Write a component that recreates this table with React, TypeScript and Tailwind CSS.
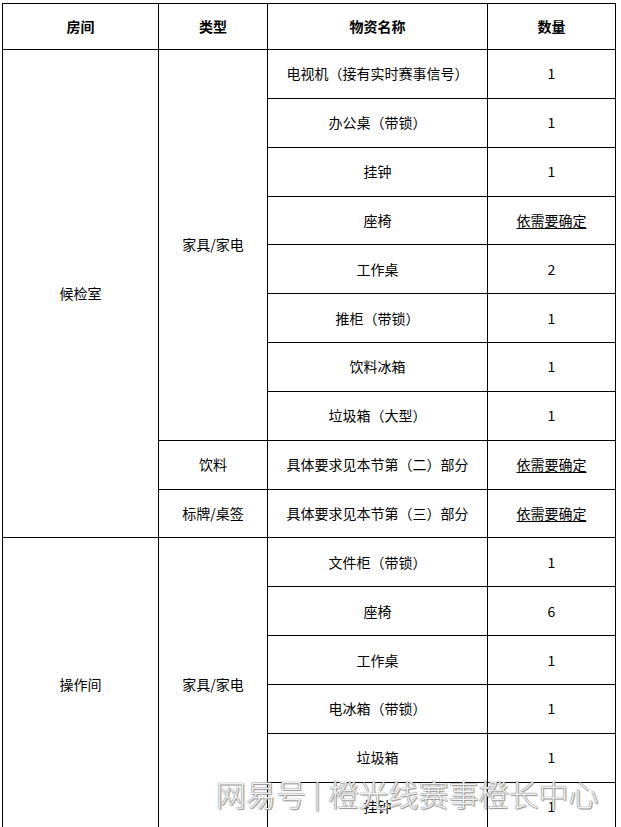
import React from 'react'

type Item = { name: string; qty: string }

const waitingItems: Item[] = [
  { name: '电视机（接有实时赛事信号）', qty: '1' },
  { name: '办公桌（带锁）', qty: '1' },
  { name: '挂钟', qty: '1' },
  { name: '座椅', qty: '依需要确定' },
  { name: '工作桌', qty: '2' },
  { name: '推柜（带锁）', qty: '1' },
  { name: '饮料冰箱', qty: '1' },
  { name: '垃圾箱（大型）', qty: '1' },
]

const operatorItems: Item[] = [
  { name: '文件柜（带锁）', qty: '1' },
  { name: '座椅', qty: '6' },
  { name: '工作桌', qty: '1' },
  { name: '电冰箱（带锁）', qty: '1' },
  { name: '垃圾箱', qty: '1' },
  { name: '挂钟', qty: '1' },
]

const cell = 'border border-black text-center align-middle'

function Qty({ value }: { value: string }) {
  if (value === '依需要确定') {
    return <span className="underline underline-offset-2">{value}</span>
  }
  return <>{value}</>
}

export default function App() {
  return (
    <div
      className="relative h-[827px] w-[621px] overflow-hidden bg-white text-[14px] text-black"
      style={{ fontFamily: '"Noto Sans CJK SC", "Noto Sans", sans-serif' }}
    >
      <div className="pl-[2px] pt-[3px]">
        <table className="w-[613px] table-fixed border-collapse">
          <colgroup>
            <col className="w-[156px]" />
            <col className="w-[109px]" />
            <col className="w-[220px]" />
            <col className="w-[128px]" />
          </colgroup>
          <thead>
            <tr className="h-[46px] font-bold">
              <th className={cell}>房间</th>
              <th className={cell}>类型</th>
              <th className={cell}>物资名称</th>
              <th className={cell}>数量</th>
            </tr>
          </thead>
          <tbody>
            {waitingItems.map((item, i) => (
              <tr key={'w' + i} className="h-[48.85px]">
                {i === 0 && (
                  <>
                    <td rowSpan={10} className={cell}>候检室</td>
                    <td rowSpan={8} className={cell}>家具/家电</td>
                  </>
                )}
                <td className={cell}>{item.name}</td>
                <td className={cell}><Qty value={item.qty} /></td>
              </tr>
            ))}
            <tr className="h-[48.85px]">
              <td className={cell}>饮料</td>
              <td className={cell}>具体要求见本节第（二）部分</td>
              <td className={cell}><Qty value="依需要确定" /></td>
            </tr>
            <tr className="h-[48.85px]">
              <td className={cell}>标牌/桌签</td>
              <td className={cell}>具体要求见本节第（三）部分</td>
              <td className={cell}><Qty value="依需要确定" /></td>
            </tr>
            {operatorItems.map((item, i) => (
              <tr key={'o' + i} className="h-[48.85px]">
                {i === 0 && (
                  <>
                    <td rowSpan={6} className={cell}>操作间</td>
                    <td rowSpan={6} className={cell}>家具/家电</td>
                  </>
                )}
                <td className={cell}>{item.name}</td>
                <td className={cell}><Qty value={item.qty} /></td>
              </tr>
            ))}
          </tbody>
        </table>
      </div>

      {/* watermark */}
      <div className="pointer-events-none absolute left-[216px] top-[778px] flex items-center whitespace-nowrap text-[30px] font-light leading-none text-white/90 [text-shadow:0_0_1px_#777,0_0_1px_#777,1px_1px_1px_#999]">
        <span>网易号</span>
        <span className="mx-[8px] text-[26px]">|</span>
        <span>橙光线赛事橙长中心</span>
      </div>
    </div>
  )
}
